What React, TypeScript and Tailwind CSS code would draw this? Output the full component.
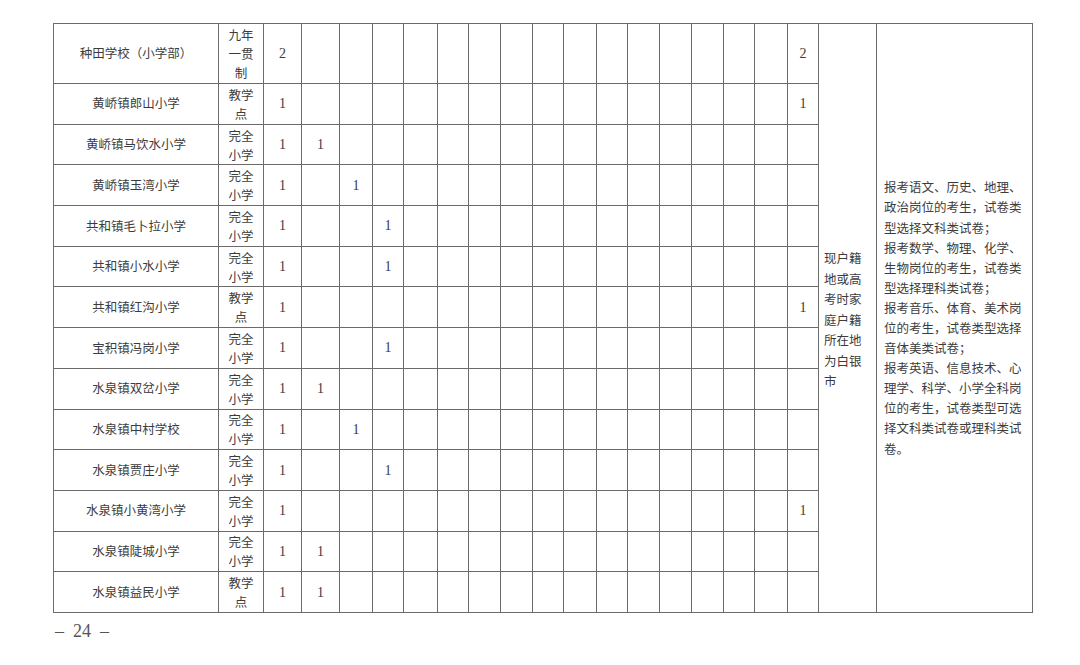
import React from "react";

const cjk = "font-['Noto_Sans_CJK_SC',sans-serif]";

type Row = { name: string; type: string; counts: Record<number, string> };

const rows: Row[] = [
  { name: "种田学校（小学部）", type: "九年一贯制", counts: { 0: "2", 16: "2" } },
  { name: "黄峤镇郎山小学", type: "教学点", counts: { 0: "1", 16: "1" } },
  { name: "黄峤镇马饮水小学", type: "完全小学", counts: { 0: "1", 1: "1" } },
  { name: "黄峤镇玉湾小学", type: "完全小学", counts: { 0: "1", 2: "1" } },
  { name: "共和镇毛卜拉小学", type: "完全小学", counts: { 0: "1", 3: "1" } },
  { name: "共和镇小水小学", type: "完全小学", counts: { 0: "1", 3: "1" } },
  { name: "共和镇红沟小学", type: "教学点", counts: { 0: "1", 16: "1" } },
  { name: "宝积镇冯岗小学", type: "完全小学", counts: { 0: "1", 3: "1" } },
  { name: "水泉镇双岔小学", type: "完全小学", counts: { 0: "1", 1: "1" } },
  { name: "水泉镇中村学校", type: "完全小学", counts: { 0: "1", 2: "1" } },
  { name: "水泉镇贾庄小学", type: "完全小学", counts: { 0: "1", 3: "1" } },
  { name: "水泉镇小黄湾小学", type: "完全小学", counts: { 0: "1", 16: "1" } },
  { name: "水泉镇陡城小学", type: "完全小学", counts: { 0: "1", 1: "1" } },
  { name: "水泉镇益民小学", type: "教学点", counts: { 0: "1", 1: "1" } },
];

const condition = ["现户籍", "地或高", "考时家", "庭户籍", "所在地", "为白银", "市"];

const notes = [
  "报考语文、历史、地理、",
  "政治岗位的考生，试卷类",
  "型选择文科类试卷；",
  "报考数学、物理、化学、",
  "生物岗位的考生，试卷类",
  "型选择理科类试卷；",
  "报考音乐、体育、美术岗",
  "位的考生，试卷类型选择",
  "音体美类试卷；",
  "报考英语、信息技术、心",
  "理学、科学、小学全科岗",
  "位的考生，试卷类型可选",
  "择文科类试卷或理科类试",
  "卷。",
];

const cell = "border border-[#6b6b6b] p-0";

export default function App() {
  return (
    <main className="min-h-[665px] w-[1080px] bg-white pl-[53px] pt-[23px] text-[#3c3c3c]">
      <table className="w-[979px] table-fixed border-collapse">
        <colgroup>
          <col className="w-[165px]" />
          <col className="w-[45px]" />
          <col className="w-[38px]" />
          <col className="w-[38px]" />
          <col className="w-[33px]" />
          <col className="w-[31px]" />
          <col className="w-[34px]" />
          <col className="w-[31px]" />
          <col className="w-[32px]" />
          <col className="w-[32px]" />
          <col className="w-[31px]" />
          <col className="w-[33px]" />
          <col className="w-[31px]" />
          <col className="w-[32px]" />
          <col className="w-[32px]" />
          <col className="w-[32px]" />
          <col className="w-[31px]" />
          <col className="w-[33px]" />
          <col className="w-[31px]" />
          <col className="w-[58px]" />
          <col className="w-[156px]" />
        </colgroup>
        <tbody>
          {rows.map((r, i) => (
            <tr key={r.name} className={i === 0 ? "h-[60px]" : "h-[40.7px]"}>
              <td className={`${cell} ${cjk} text-center text-[12.5px]`}>{r.name}</td>
              <td className={`${cell} ${cjk} px-[8px] text-center text-[12.5px] leading-[19px]`}>
                {r.type}
              </td>
              {Array.from({ length: 17 }).map((_, j) => (
                <td
                  key={j}
                  className={`${cell} text-center font-['Liberation_Serif',serif] text-[14px]`}
                >
                  {r.counts[j] ?? ""}
                </td>
              ))}
              {i === 0 && (
                <>
                  <td rowSpan={14} className={`${cell} ${cjk} pl-[5px] pt-[4px] text-[12.5px] leading-[20.5px]`}>
                    {condition.map((l) => (
                      <div key={l}>{l}</div>
                    ))}
                  </td>
                  <td rowSpan={14} className={`${cell} ${cjk} pl-[7px] text-[12.5px] leading-[20.1px]`}>
                    {notes.map((l) => (
                      <div key={l} className="whitespace-nowrap">
                        {l}
                      </div>
                    ))}
                  </td>
                </>
              )}
            </tr>
          ))}
        </tbody>
      </table>
      <div className="mt-[5px] flex gap-[9px] pl-[2px] font-['Liberation_Serif',serif] text-[18px] text-[#555]">
        <span>–</span>
        <span>24</span>
        <span>–</span>
      </div>
    </main>
  );
}
